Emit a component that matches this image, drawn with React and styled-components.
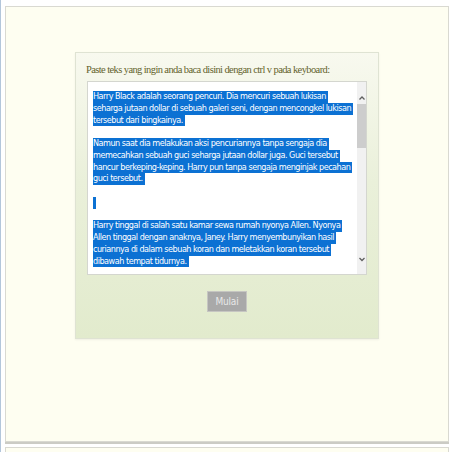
import React from 'react';
import styled, { createGlobalStyle } from 'styled-components';

const Global = createGlobalStyle`
  html, body { margin: 0; padding: 0; background: #fff; }
`;

const Page = styled.div`
  display: flex;
  flex-direction: column;
  gap: 5px;
  height: 452px;
  overflow: hidden;
  box-sizing: border-box;
  padding: 6px 3px 0 4px;
  border-left: 1px solid #b3c6da;
`;

const Panel = styled.div`
  flex: none;
  height: ${(p) => p.$h}px;
  box-sizing: border-box;
  background: #fefef1;
  border: 1px solid #d9d9d1;
  box-shadow: 0 2px 0 #cbcbc4;
  display: flex;
  justify-content: center;
  align-items: flex-start;
`;

const Card = styled.div`
  margin-top: 45px;
  width: 304px;
  height: 287px;
  box-sizing: border-box;
  border: 1px solid #dfe3d3;
  box-shadow: 0 1px 2px rgba(0, 0, 0, 0.06);
  background: linear-gradient(#f8f9ef 0%, #eaf0da 45%, #e2ebcd 100%);
  padding: 11px 10px 0 10px;
  display: flex;
  flex-direction: column;
`;

const Title = styled.div`
  font-family: "Liberation Serif", "Times New Roman", serif;
  font-size: 10.5px;
  line-height: 12px;
  letter-spacing: -0.6px;
  color: #64632c;
  white-space: nowrap;
`;

const TextBox = styled.div`
  margin: 5px 0 0 1px;
  width: 280px;
  height: 194px;
  box-sizing: border-box;
  border: 1px solid #d4d6cf;
  background: #fff;
  display: flex;
`;

const TextArea = styled.div`
  flex: 1;
  padding: 9px 0 0 5px;
  overflow: hidden;
  font-family: "DejaVu Sans Condensed", "DejaVu Sans", sans-serif;
  font-size: 9px;
  letter-spacing: -0.48px;
  color: #fff;
`;

const Line = styled.div`
  height: 11.75px;
  white-space: pre;
`;

const Sel = styled.span`
  display: inline-block;
  vertical-align: top;
  line-height: 11.75px;
  height: 11.75px;
  background: #0c71d3;
  min-width: ${(p) => (p.$empty ? '3px' : '0')};
`;

const Scrollbar = styled.div`
  width: 9px;
  flex: none;
  background: #f1f1f1;
  display: flex;
  flex-direction: column;
  align-items: center;
  padding: 12px 0 11px;
  box-sizing: border-box;
`;

const Thumb = styled.div`
  align-self: stretch;
  height: 44px;
  margin-top: 2px;
  background: #cdcdcd;
`;

const Track = styled.div`
  flex: 1;
`;

const Button = styled.button`
  align-self: center;
  margin-top: 16px;
  width: 40px;
  height: 21px;
  padding: 0;
  border: 1px solid #c6c6c2;
  background: #a9a9a9;
  color: #e8e8e8;
  font-family: "DejaVu Sans Condensed", "DejaVu Sans", sans-serif;
  font-size: 10px;
  letter-spacing: -0.2px;
`;

const Chevron = ({ up }) => (
  <svg width="8" height="8" viewBox="0 0 8 8">
    <path
      d={up ? 'M1.5 5.5 L4 3 L6.5 5.5' : 'M1.5 3 L4 5.5 L6.5 3'}
      fill="none"
      stroke="#5f5f5f"
      strokeWidth="1.3"
    />
  </svg>
);

const lines = [
  'Harry Black adalah seorang pencuri. Dia mencuri sebuah lukisan ',
  'seharga jutaan dollar di sebuah galeri seni, dengan mencongkel lukisan ',
  'tersebut dari bingkainya. ',
  null,
  'Namun saat dia melakukan aksi pencuriannya tanpa sengaja dia ',
  'memecahkan sebuah guci seharga jutaan dollar juga. Guci tersebut ',
  'hancur berkeping-keping. Harry pun tanpa sengaja menginjak pecahan ',
  'guci tersebut. ',
  null,
  '',
  null,
  'Harry tinggal di salah satu kamar sewa rumah nyonya Allen. Nyonya ',
  'Allen tinggal dengan anaknya, Janey. Harry menyembunyikan hasil ',
  'curiannya di dalam sebuah koran dan meletakkan koran tersebut ',
  'dibawah tempat tidurnya. ',
];

export default function App() {
  return (
    <>
      <Global />
      <Page>
        <Panel $h={436}>
          <Card>
            <Title>Paste teks yang ingin anda baca disini dengan ctrl v pada keyboard:</Title>
            <TextBox>
              <TextArea>
                {lines.map((l, i) => (
                  <Line key={i}>
                    {l === null ? null : <Sel $empty={l === ''}>{l}</Sel>}
                  </Line>
                ))}
              </TextArea>
              <Scrollbar>
                <Chevron up />
                <Thumb />
                <Track />
                <Chevron />
              </Scrollbar>
            </TextBox>
            <Button>Mulai</Button>
          </Card>
        </Panel>
        <Panel $h={40} />
      </Page>
    </>
  );
}
